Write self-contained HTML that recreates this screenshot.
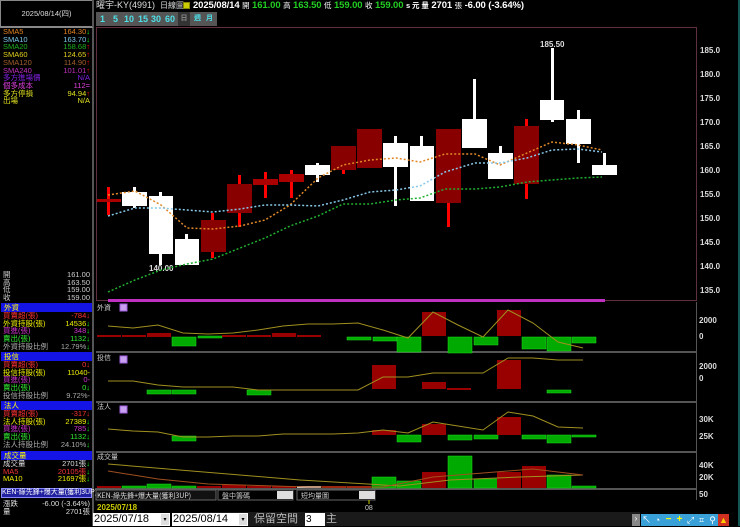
<!DOCTYPE html>
<html><head><meta charset="utf-8"><style>
*{margin:0;padding:0;box-sizing:border-box}
body{width:740px;height:526px;background:#000;overflow:hidden;position:relative;font-family:"Liberation Sans","Noto Sans CJK TC",sans-serif;color:#fff}
.a{position:absolute;white-space:nowrap}
.lp{position:absolute;left:0;width:93px;font-size:7.5px;line-height:7.7px}
.lp div{display:flex;justify-content:space-between;padding:0 3px 0 3px}
.hb{background:#1414e6;color:#ff0;text-align:center;height:9px;line-height:9px;font-size:7.5px;margin:0 1px}
</style></head><body>
<div class="a" style="left:0;top:0;width:93px;height:27px;border:1px solid #888;font-size:7.5px;line-height:25px;text-align:center;color:#ddd">2025/08/14(四)</div>
<div class="a" style="left:92px;top:0;width:2px;height:526px;background:#555"></div>

<div class="lp" style="top:28px">
<div><span style="color:#e08020">SMA5</span><span style="color:#e08020">164.30<b style="color:#0f0">↓</b></span></div>
<div><span style="color:#7cc8e8">SMA10</span><span style="color:#7cc8e8">163.70<b style="color:#0f0">↓</b></span></div>
<div><span style="color:#20b020">SMA20</span><span style="color:#20b020">158.68<b style="color:#f00">↑</b></span></div>
<div><span style="color:#e0d020">SMA60</span><span style="color:#e0d020">124.65<b style="color:#f00">↑</b></span></div>
<div><span style="color:#a06030">SMA120</span><span style="color:#a06030">114.90<b style="color:#f00">↑</b></span></div>
<div><span style="color:#c030c0">SMA240</span><span style="color:#c030c0">101.01<b style="color:#f00">↑</b></span></div>
<div><span style="color:#8020e0">多方進場價</span><span style="color:#8020e0">N/A</span></div>
<div><span style="color:#e040e0">個多成本</span><span style="color:#e040e0">112=</span></div>
<div><span style="color:#e0e020">多方停損</span><span style="color:#e0e020">94.94<b style="color:#f00">↑</b></span></div>
<div><span style="color:#e0e020">出場</span><span style="color:#e0e020">N/A</span></div>
</div>
<div class="a" style="left:0;top:27px;width:93px;height:1px;background:#888"></div>

<div class="lp" style="top:271px;color:#ccc">
<div><span>開</span><span>161.00</span></div>
<div><span>高</span><span>163.50</span></div>
<div><span>低</span><span>159.00</span></div>
<div><span>收</span><span>159.00</span></div>
</div>

<div class="lp" style="top:303px">
<div class="hb">外資</div>
<div><span style="color:#f33">買賣超(張)</span><span style="color:#f33">-784<b>↓</b></span></div>
<div><span style="color:#ee0">外資持股(張)</span><span style="color:#ee0">14536<b style="color:#0f0">↓</b></span></div>
<div><span style="color:#c3c">買進(張)</span><span style="color:#c3c">348<b style="color:#0f0">↓</b></span></div>
<div><span style="color:#3e3">賣出(張)</span><span style="color:#3e3">1132<b style="color:#0f0">↓</b></span></div>
<div><span style="color:#aaa">外資持股比例</span><span style="color:#aaa">12.79%<b style="color:#0f0">↓</b></span></div>
</div>
<div class="lp" style="top:352px">
<div class="hb">投信</div>
<div><span style="color:#f33">買賣超(張)</span><span style="color:#f33">0<b>↓</b></span></div>
<div><span style="color:#ee0">投信持股(張)</span><span style="color:#ee0">11040-</span></div>
<div><span style="color:#c3c">買進(張)</span><span style="color:#c3c">0-</span></div>
<div><span style="color:#3e3">賣出(張)</span><span style="color:#3e3">0<b style="color:#0f0">↓</b></span></div>
<div><span style="color:#aaa">投信持股比例</span><span style="color:#aaa">9.72%-</span></div>
</div>
<div class="lp" style="top:401px">
<div class="hb">法人</div>
<div><span style="color:#f33">買賣超(張)</span><span style="color:#f33">-317<b>↓</b></span></div>
<div><span style="color:#ee0">法人持股(張)</span><span style="color:#ee0">27389<b style="color:#0f0">↓</b></span></div>
<div><span style="color:#c3c">買進(張)</span><span style="color:#c3c">785<b style="color:#0f0">↓</b></span></div>
<div><span style="color:#3e3">賣出(張)</span><span style="color:#3e3">1132<b style="color:#0f0">↓</b></span></div>
<div><span style="color:#aaa">法人持股比例</span><span style="color:#aaa">24.10%<b style="color:#0f0">↓</b></span></div>
</div>
<div class="lp" style="top:451px">
<div class="hb">成交量</div>
<div><span style="color:#ddd">成交量</span><span style="color:#ddd">2701張<b style="color:#0f0">↓</b></span></div>
<div><span style="color:#e33">MA5</span><span style="color:#e33">20105張<b style="color:#0f0">↓</b></span></div>
<div><span style="color:#ee0">MA10</span><span style="color:#ee0">21697張<b style="color:#0f0">↓</b></span></div>
</div>
<div class="a" style="left:1px;top:488px;width:91px;height:10px;background:#2020a0;border:1px solid #88f;font-size:7px;line-height:8px;color:#fff">KEN-綠先鋒+爆大量(獲利3UP)</div>
<div class="lp" style="top:500px;color:#ddd">
<div><span>漲跌</span><span>-6.00 (-3.64%)</span></div>
<div><span>量</span><span>2701張</span></div>
</div>

<div class="a" style="left:96px;top:0;font-size:9px;line-height:11px;color:#ddd">曜宇-KY(4991)</div>
<div class="a" style="left:160px;top:0;font-size:8px;line-height:11px;color:#ddd">日線圖</div>
<div class="a" style="left:183px;top:2px;width:7px;height:7px;background:#cc0;border:1px solid #880"></div>
<div class="a" style="left:193px;top:0;font-size:9.5px;line-height:11px;font-weight:bold;letter-spacing:-0.1px">2025/08/14 <span style="font-weight:normal;font-size:7.5px">開</span> <span style="color:#2c2">161.00</span> <span style="font-weight:normal;font-size:7.5px">高</span> <span style="color:#2c2">163.50</span> <span style="font-weight:normal;font-size:7.5px">低</span> <span style="color:#2c2">159.00</span> <span style="font-weight:normal;font-size:7.5px">收</span> <span style="color:#2c2">159.00</span> <span style="font-size:7.5px">s 元 量</span> 2701 <span style="font-weight:normal;font-size:7.5px">張</span> -6.00 (-3.64%)</div>
<div class="a" style="left:96px;top:12px;width:121px;height:14px;background:#555;font-size:9px;font-weight:bold;line-height:14px;color:#4de0e8">
<span class="a" style="left:4px">1</span><span class="a" style="left:17px">5</span><span class="a" style="left:28px">10</span><span class="a" style="left:42px">15</span><span class="a" style="left:55px">30</span><span class="a" style="left:69px">60</span>
<span class="a" style="left:82px;width:12px;height:14px;background:#333;color:#888;font-size:7px;text-align:center">日</span><span class="a" style="left:98px;font-size:7px">週</span><span class="a" style="left:110px;font-size:7px">月</span></div>

<svg class="a" style="left:0;top:0" width="740" height="526" viewBox="0 0 740 526">
<g font-family="Liberation Sans" font-size="8" font-weight="bold" fill="#ddd">
<rect x="96.5" y="27.5" width="600" height="273" fill="none" stroke="#603040"/>
<text x="700" y="53">185.0</text><text x="700" y="77">180.0</text><text x="700" y="101">175.0</text><text x="700" y="125">170.0</text><text x="700" y="149">165.0</text><text x="700" y="173">160.0</text><text x="700" y="197">155.0</text><text x="700" y="221">150.0</text><text x="700" y="245">145.0</text><text x="700" y="269">140.0</text><text x="700" y="293">135.0</text>
<text x="540" y="47">185.50</text><text x="149" y="271">140.00</text>
</g>
<g>
<rect x="107" y="187" width="3" height="28" fill="#f00"/><rect x="97" y="199" width="24" height="3" fill="#a00"/>
<rect x="133" y="187" width="3" height="21" fill="#fff"/><rect x="122" y="192" width="25" height="14" fill="#fff"/>
<rect x="159" y="192" width="3" height="73" fill="#fff"/><rect x="149" y="196" width="24" height="58" fill="#fff"/>
<rect x="185" y="234" width="3" height="30" fill="#fff"/><rect x="175" y="239" width="24" height="26" fill="#fff"/>
<rect x="211" y="213" width="3" height="45" fill="#f00"/><rect x="201" y="220" width="25" height="32" fill="#800"/>
<rect x="238" y="175" width="3" height="52" fill="#f00"/><rect x="227" y="184" width="25" height="29" fill="#800"/>
<rect x="264" y="172" width="3" height="26" fill="#f00"/><rect x="253" y="179" width="25" height="6" fill="#a00"/>
<rect x="290" y="170" width="3" height="28" fill="#f00"/><rect x="279" y="174" width="25" height="8" fill="#a00"/>
<rect x="316" y="163" width="3" height="19" fill="#fff"/><rect x="305" y="165" width="25" height="10" fill="#fff"/>
<rect x="342" y="146" width="3" height="28" fill="#f00"/><rect x="331" y="146" width="25" height="24" fill="#800"/>
<rect x="357" y="129" width="25" height="39" fill="#800"/>
<rect x="394" y="136" width="3" height="70" fill="#fff"/><rect x="383" y="143" width="25" height="24" fill="#fff"/>
<rect x="420" y="136" width="3" height="10" fill="#fff"/><rect x="410" y="146" width="24" height="55" fill="#fff"/>
<rect x="447" y="129" width="3" height="98" fill="#f00"/><rect x="436" y="129" width="25" height="74" fill="#800"/>
<rect x="473" y="79" width="3" height="40" fill="#fff"/><rect x="462" y="119" width="25" height="29" fill="#fff"/>
<rect x="499" y="146" width="3" height="10" fill="#fff"/><rect x="488" y="153" width="25" height="26" fill="#fff"/>
<rect x="525" y="119" width="3" height="80" fill="#f00"/><rect x="514" y="126" width="25" height="58" fill="#800"/>
<rect x="551" y="48" width="3" height="74" fill="#fff"/><rect x="540" y="100" width="24" height="20" fill="#fff"/>
<rect x="577" y="110" width="3" height="53" fill="#fff"/><rect x="566" y="119" width="25" height="25" fill="#fff"/>
<rect x="603" y="153" width="3" height="12" fill="#fff"/><rect x="592" y="165" width="25" height="10" fill="#fff"/>
</g>
<g fill="none" stroke-width="1.5" stroke-dasharray="2,2">
<polyline stroke="#e08828" points="108,195 135,191 161,205 187,228 213,229 240,226 265,220 290,205 318,178 343,165 370,160 396,158 420,162 445,154 475,154 500,165 527,153 552,142 578,145 602,150"/>
<polyline stroke="#88c8e8" points="108,216 135,208 161,208 187,210 213,212 240,209 265,205 290,205 318,206 343,200 370,192 396,190 420,186 445,172 475,163 500,163 527,158 552,150 578,149 602,152"/>
<polyline stroke="#20b030" points="108,292 135,280 161,270 187,264 213,259 240,248 265,238 290,226 318,216 343,204 370,204 396,200 420,198 445,189 475,189 500,187 527,182 552,180 578,178 602,177"/>
</g>
<rect x="108" y="299" width="497" height="3" fill="#c030c0"/>
<g fill="none" stroke="#555" stroke-width="2">
<line x1="96" y1="352" x2="696" y2="352"/><line x1="96" y1="402" x2="696" y2="402"/><line x1="96" y1="452" x2="696" y2="452"/><line x1="96" y1="489" x2="696" y2="489"/>
</g>
<line x1="696.5" y1="302" x2="696.5" y2="500" stroke="#555"/>
<g font-size="7" fill="#ccc" font-family="Noto Sans CJK TC"><text x="97" y="310">外資</text><text x="97" y="360">投信</text><text x="97" y="409">法人</text><text x="97" y="459">成交量</text></g>
<g fill="#c8a0f0" stroke="#a060e0"><rect x="120" y="304" width="7" height="7"/><rect x="120" y="356" width="7" height="7"/><rect x="120" y="406" width="7" height="7"/></g>
<g font-family="Liberation Sans" font-size="8" font-weight="bold" fill="#ddd"><text x="699" y="323">2000</text><text x="699" y="339">0</text><text x="699" y="369">2000</text><text x="699" y="381">0</text><text x="699" y="422">30K</text><text x="699" y="439">25K</text><text x="699" y="468">40K</text><text x="699" y="480">20K</text><text x="699" y="497">50</text></g>
<g fill="#0a0" stroke="#2d2" stroke-width=".5">
<rect x="172" y="337" width="24" height="9"/><rect x="198" y="336" width="24" height="2"/><rect x="347" y="337" width="24" height="3"/><rect x="373" y="337" width="24" height="4"/><rect x="397" y="337" width="24" height="15"/><rect x="448" y="337" width="24" height="16"/><rect x="474" y="337" width="24" height="8"/><rect x="522" y="337" width="24" height="12"/><rect x="547" y="337" width="24" height="14"/><rect x="572" y="337" width="24" height="6"/>
</g>
<g fill="#900"><rect x="97" y="335" width="24" height="2"/><rect x="122" y="335" width="24" height="2"/><rect x="147" y="333" width="24" height="4"/><rect x="222" y="335" width="24" height="2"/><rect x="247" y="335" width="24" height="2"/><rect x="272" y="333" width="24" height="4"/><rect x="297" y="335" width="24" height="2"/><rect x="422" y="312" width="24" height="24"/><rect x="497" y="310" width="24" height="26"/></g>
<polyline fill="none" stroke="#a09020" points="108,326 133,328 158,325 183,333 208,334 233,333 258,330 283,326 308,324 333,324 358,323 383,330 408,338 433,312 458,325 483,337 508,310 533,323 558,342 583,348"/>
<g fill="#0a0" stroke="#2d2" stroke-width=".5"><rect x="147" y="390" width="24" height="4"/><rect x="172" y="390" width="24" height="4"/><rect x="247" y="390" width="24" height="5"/><rect x="547" y="390" width="24" height="3"/></g>
<g fill="#900"><rect x="372" y="365" width="24" height="24"/><rect x="422" y="382" width="24" height="7"/><rect x="447" y="388" width="24" height="2"/><rect x="497" y="360" width="24" height="29"/></g>
<polyline fill="none" stroke="#a09020" points="108,381 133,381 158,385 183,387 208,387 233,387 258,390 283,390 308,390 333,390 358,390 383,377 408,377 433,373 458,373 483,373 508,358 533,358 558,360 583,360"/>
<g fill="#0a0" stroke="#2d2" stroke-width=".5"><rect x="172" y="436" width="24" height="5"/><rect x="397" y="435" width="24" height="7"/><rect x="448" y="435" width="24" height="5"/><rect x="474" y="435" width="24" height="4"/><rect x="522" y="435" width="24" height="4"/><rect x="547" y="435" width="24" height="8"/><rect x="572" y="435" width="24" height="2"/></g>
<g fill="#900"><rect x="372" y="430" width="24" height="5"/><rect x="422" y="424" width="24" height="11"/><rect x="497" y="417" width="24" height="18"/></g>
<polyline fill="none" stroke="#a09020" points="108,429 133,431 158,432 183,437 208,437 233,436 258,436 283,434 308,434 333,434 358,433 383,430 408,433 433,422 458,426 483,430 508,412 533,416 558,427 583,428"/>
<g fill="#0a0" stroke="#2d2" stroke-width=".5"><rect x="122" y="486" width="24" height="2"/><rect x="147" y="484" width="24" height="4"/><rect x="172" y="486" width="24" height="2"/><rect x="372" y="477" width="24" height="11"/><rect x="397" y="481" width="24" height="7"/><rect x="448" y="456" width="24" height="32"/><rect x="474" y="479" width="24" height="9"/><rect x="547" y="475" width="24" height="13"/><rect x="572" y="486" width="24" height="2"/></g>
<g fill="#900"><rect x="97" y="486" width="24" height="2"/><rect x="197" y="486" width="24" height="2"/><rect x="222" y="485" width="24" height="3"/><rect x="247" y="486" width="24" height="2"/><rect x="272" y="486" width="24" height="2"/><rect x="322" y="486" width="24" height="2"/><rect x="347" y="486" width="24" height="2"/><rect x="422" y="472" width="24" height="16"/><rect x="497" y="472" width="24" height="16"/><rect x="522" y="466" width="24" height="22"/></g>
<rect x="297" y="486" width="24" height="2" fill="#ddd"/>
<polyline fill="none" stroke="#a09020" points="108,464 300,480 400,486 450,480 520,477 583,475"/>
<polyline fill="none" stroke="#a05020" points="108,471 158,479 208,484 308,487 383,487 433,477 483,473 533,469 583,475"/>
<rect x="96" y="490" width="120" height="10" fill="#111" stroke="#666"/>
<text x="97" y="498" font-size="7" fill="#ddd" font-family="Noto Sans CJK TC">KEN-綠先鋒+爆大量(獲利3UP)</text>
<rect x="218" y="490" width="75" height="10" fill="#000" stroke="#666"/><text x="222" y="498" font-size="7" fill="#ccc" font-family="Noto Sans CJK TC">盤中籌碼</text>
<rect x="277" y="491" width="16" height="8" fill="#ddd"/>
<rect x="297" y="490" width="78" height="10" fill="#000" stroke="#666"/><text x="301" y="498" font-size="7" fill="#ccc" font-family="Noto Sans CJK TC">短均量圖</text>
<rect x="359" y="491" width="16" height="8" fill="#ddd"/>
<line x1="369" y1="500" x2="369" y2="504" stroke="#cc0"/>
<text x="97" y="510" font-size="8" font-weight="bold" fill="#cc0" font-family="Liberation Sans">2025/07/18</text>
<text x="365" y="510" font-size="7" fill="#ccc" font-family="Liberation Sans">08</text>
<rect x="200" y="512" width="440" height="14" fill="#1a1a1a"/>
<line x1="739" y1="0" x2="739" y2="526" stroke="#2aa" />
</svg>

<div class="a" style="left:93px;top:513px;width:77px;height:13px;background:#fff;color:#000;font-size:11px;line-height:13px;padding-left:1px">2025/07/18<span class="a" style="right:1px;top:1px;width:8px;height:11px;background:#ddd;font-size:6px;text-align:center">▾</span></div>
<div class="a" style="left:160px;top:512px;font-size:11px;color:#ddd">~</div>
<div class="a" style="left:172px;top:513px;width:76px;height:13px;background:#fff;color:#000;font-size:11px;line-height:13px;padding-left:1px">2025/08/14<span class="a" style="right:1px;top:1px;width:8px;height:11px;background:#ddd;font-size:6px;text-align:center">▾</span></div>
<div class="a" style="left:254px;top:512px;font-size:11px;color:#bbb;line-height:14px">保留空間</div>
<div class="a" style="left:305px;top:513px;width:20px;height:13px;background:#fff;color:#000;font-size:10px;line-height:13px;padding-left:1px">3</div>
<div class="a" style="left:326px;top:512px;font-size:11px;color:#bbb;line-height:14px">主</div>
<div class="a" style="left:632px;top:514px;width:8px;height:12px;background:#888;color:#fff;font-size:8px;text-align:center">›</div>
<div class="a" style="left:641px;top:514px;width:99px;height:12px;display:flex">
<span style="width:11px;background:#3aa0d8;color:#fff;font-size:9px;text-align:center;line-height:12px">↖</span>
<span style="width:11px;background:#3aa0d8;color:#fff;font-size:9px;text-align:center;line-height:12px">◔</span>
<span style="width:11px;background:#3aa0d8;color:#ff0;font-size:10px;text-align:center;line-height:12px;font-weight:bold">−</span>
<span style="width:11px;background:#3aa0d8;color:#ff0;font-size:10px;text-align:center;line-height:12px;font-weight:bold">+</span>
<span style="width:11px;background:#3aa0d8;color:#fff;font-size:9px;text-align:center;line-height:12px">⤢</span>
<span style="width:11px;background:#3aa0d8;color:#fff;font-size:9px;text-align:center;line-height:12px">⌗</span>
<span style="width:11px;background:#3aa0d8;color:#fff;font-size:9px;text-align:center;line-height:12px">⚲</span>
<span style="width:11px;background:#d03020;color:#fc0;font-size:9px;text-align:center;line-height:12px">▲</span>
</div>
</body></html>
